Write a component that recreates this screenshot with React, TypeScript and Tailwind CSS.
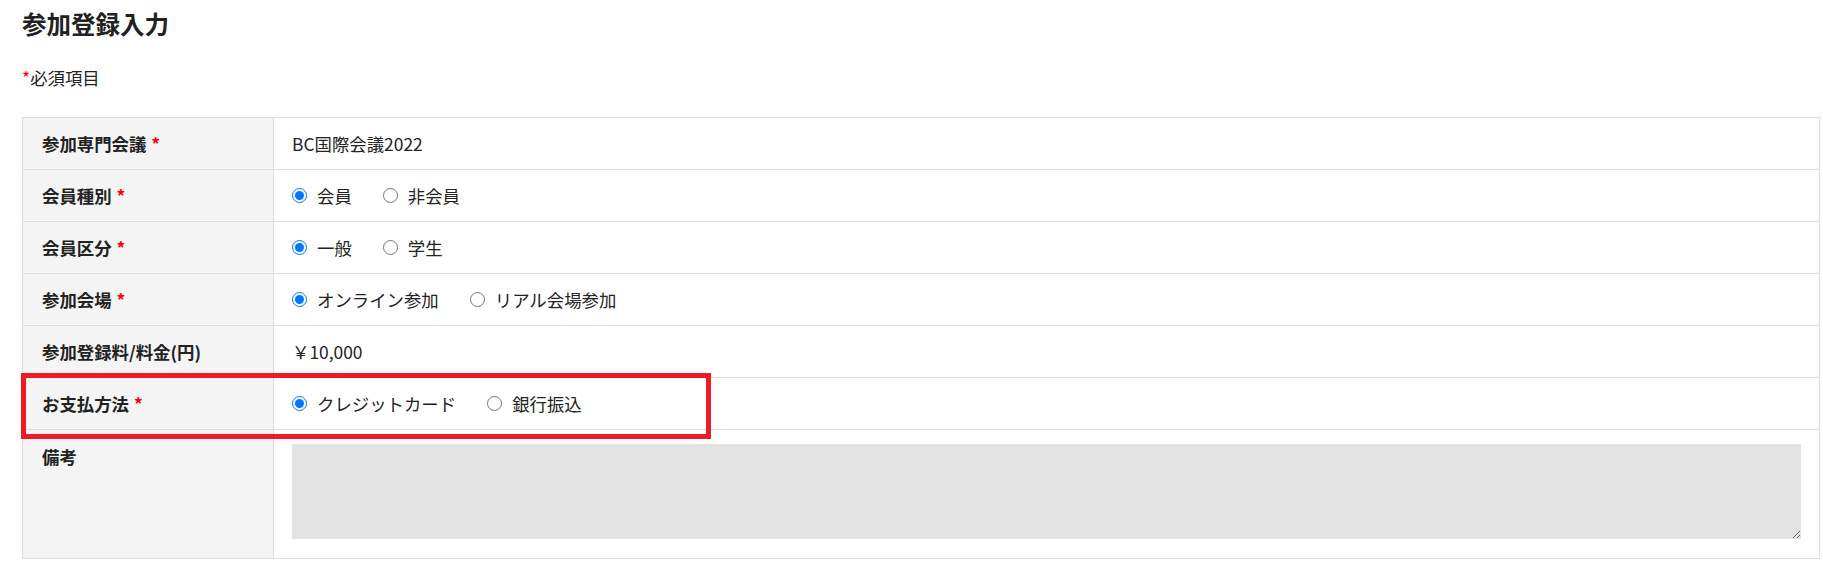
import type { ReactNode } from 'react'

const font = { fontFamily: '"Noto Sans CJK JP", "Noto Sans", sans-serif' }

function Req() {
  return <span className="ml-[5px] text-[#f00]">*</span>
}

function Radio({ checked, label }: { checked?: boolean; label: string }) {
  return (
    <label className="flex items-center">
      <input
        type="radio"
        defaultChecked={checked}
        className="m-0 h-[15px] w-[15px] shrink-0"
        readOnly
      />
      <span className="ml-[10px]">{label}</span>
    </label>
  )
}

function Row({ label, required, children, last }: {
  label: string
  required?: boolean
  children: ReactNode
  last?: boolean
}) {
  return (
    <div className={`grid grid-cols-[251px_1fr] ${last ? '' : 'h-[52px] border-b border-[#dddddd]'}`}>
      <div className={`flex bg-[#f4f4f4] border-r border-[#dddddd] pl-[19px] font-semibold ${last ? 'items-start pt-[14px]' : 'items-center'}`}>
        {label}
        {required && <Req />}
      </div>
      <div className={`flex pl-[18px] pr-[18px] ${last ? 'pt-[14px] pb-[19px]' : 'items-center'}`}>
        {children}
      </div>
    </div>
  )
}

export default function App() {
  return (
    <div style={font} className="bg-white text-[#222] text-[17.4px] leading-[1.5] pl-[22px] pr-[3px] pt-[4px] pb-[20px]">
      <h1 className="text-[24.5px] font-bold leading-[1.6]">参加登録入力</h1>

      <p className="mt-[22px]">
        <span className="text-[#f00]">*</span>必須項目
      </p>

      <div className="mt-[26px] border border-[#dddddd]">
        <Row label="参加専門会議" required>
          <span>BC国際会議2022</span>
        </Row>
        <Row label="会員種別" required>
          <div className="flex gap-[31px]">
            <Radio checked label="会員" />
            <Radio label="非会員" />
          </div>
        </Row>
        <Row label="会員区分" required>
          <div className="flex gap-[31px]">
            <Radio checked label="一般" />
            <Radio label="学生" />
          </div>
        </Row>
        <Row label="参加会場" required>
          <div className="flex gap-[31px]">
            <Radio checked label="オンライン参加" />
            <Radio label="リアル会場参加" />
          </div>
        </Row>
        <Row label="参加登録料/料金(円)">
          <span>￥10,000</span>
        </Row>

        {/* highlighted row */}
        <div className="relative">
          <Row label="お支払方法" required>
            <div className="flex gap-[31px]">
              <Radio checked label="クレジットカード" />
              <Radio label="銀行振込" />
            </div>
          </Row>
          <div className="pointer-events-none absolute left-[-2px] top-[-5px] h-[66px] w-[690px] border-[5px] border-[#ed1c24]" />
        </div>

        <Row label="備考" last>
          <textarea className="block h-[95px] w-full bg-[#e3e3e3] outline-none" />
        </Row>
      </div>
    </div>
  )
}
